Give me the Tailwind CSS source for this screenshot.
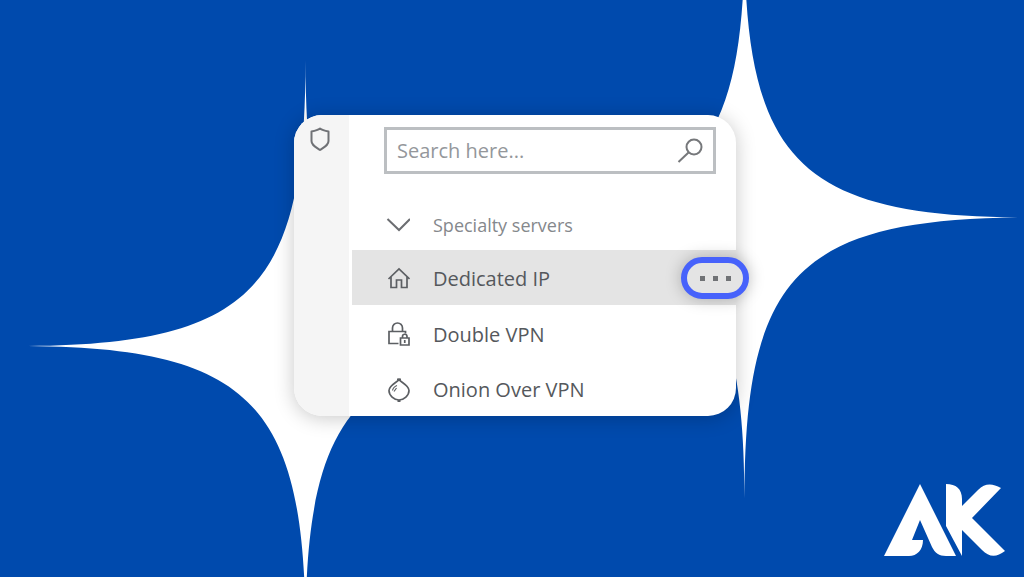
<!DOCTYPE html>
<html lang="en">

<head>
    <meta charset="UTF-8">
    <meta name="viewport" content="width=device-width, initial-scale=1.0">
    <title>Specialty servers</title>
    <script src="https://cdn.jsdelivr.net/npm/@tailwindcss/browser@4"></script>
</head>

<body class="relative min-h-screen overflow-hidden bg-[#004aad] font-['Open_Sans','Noto_Sans',sans-serif]">
    <!-- background stars -->
    <svg class="absolute inset-0 h-full w-full" viewBox="0 0 1024 577" preserveAspectRatio="xMidYMid slice" fill="#fff" aria-hidden="true">
        <path d="M305.5 60C305.5 291 361 346 594 346C361 346 305.500 402 305.500 633C305.500 402 250 346 17 346C250 346 305.500 291 305.500 60Z" />
        <path d="M744.500 -64C744.500 162 799.500 217.500 1032 217.500C799.500 217.500 744.500 273 744.500 499C744.500 273 689.500 217.500 463 217.500C689.500 217.500 744.500 162 744.500 -64Z" />
    </svg>

    <main class="relative flex min-h-screen items-center justify-center pb-[46px] pl-[6px]">
        <section class="flex w-full max-w-[442px] rounded-[28px] bg-white shadow-[0_2px_20px_rgba(0,0,0,0.22)]">
            <aside class="w-[55px] shrink-0 rounded-l-[28px] bg-[#f5f5f5] pt-3 pl-4">
                <svg class="h-6 w-5" viewBox="0 0 20 24" fill="none" stroke="#707276" stroke-width="2" stroke-linejoin="round" role="img" aria-label="Shield">
                    <path d="M10 1.500C8 3 5 3.800 1.500 4.500V14C1.500 18 5 19.500 10 23C15 19.500 18.500 18 18.500 14V4.500C15 3.800 12 3 10 1.500Z" />
                </svg>
            </aside>

            <div class="min-w-0 flex-1 pt-3 pl-[3px]">
                <form class="relative mr-5 ml-8">
                    <input type="text" aria-label="Search" placeholder="Search here..."
                        class="block h-[47px] w-full border-3 border-[#bcbfc2] bg-white pr-12 pl-[10px] text-[20px] text-[#55585c] placeholder:text-[#94979b] focus:outline-none">
                    <button type="submit" aria-label="Search" class="absolute top-[10px] right-3">
                        <svg class="h-7 w-7" viewBox="0 0 28 28" fill="none" stroke="#76787b" stroke-width="2">
                            <circle cx="18" cy="10" r="7.500" />
                            <path d="M12.500 15.500L2.500 25" />
                        </svg>
                    </button>
                </form>

                <button type="button" class="mt-6 flex h-[52px] w-full items-center gap-[23px] pt-[2px] pl-[34px] text-[18px] text-[#85888c]">
                    <svg class="h-6 w-6" viewBox="0 0 24 24" fill="none" stroke="#6c6e72" stroke-width="2">
                        <path d="M1.500 6L13 17L24 6" />
                    </svg>
                    Specialty servers
                </button>

                <ul class="text-[20px] text-[#55585c]">
                    <li class="relative bg-[#e4e4e4]">
                        <a href="#" class="flex h-[55px] items-center gap-[23px] pt-[3px] pl-[34px]">
                            <svg class="h-6 w-6" viewBox="0 0 24 24" fill="none" stroke="#5c5f63" stroke-width="1.700">
                                <path d="M2.500 12L13 2L23.500 12M5 10V20.500H10.500V13H15.500V20.500H21V10" />
                            </svg>
                            Dedicated IP
                        </a>
                        <button type="button" aria-label="More options"
                            class="absolute top-[7px] -right-[13px] flex h-[42px] w-[68px] items-center justify-center gap-2 rounded-full border-6 border-[#4762fb] bg-[#e4e4e4] shadow-[0_0_16px_rgba(0,0,0,0.25)]">
                            <span class="size-[5px] bg-[#707275]"></span>
                            <span class="size-[5px] bg-[#707275]"></span>
                            <span class="size-[5px] bg-[#707275]"></span>
                        </button>
                    </li>
                    <li>
                        <a href="#" class="flex h-[56px] items-center gap-[23px] pt-[3px] pl-[34px]">
                            <svg class="h-7 w-6" viewBox="0 0 24 28" fill="none" stroke="#5c5f63" stroke-width="1.700">
                                <path d="M12.500 22.500H3V10.500H19.500V12.500M6.500 10V7A5 5 0 0 1 16.500 7V10" />
                                <path d="M14.500 17H23V24H14.500ZM16.500 17V15.500A2.200 2.200 0 0 1 21 15.500V17M18.750 19V22" />
                            </svg>
                            Double VPN
                        </a>
                    </li>
                    <li>
                        <a href="#" class="flex h-[55px] items-center gap-[23px] pt-[3px] pl-[34px]">
                            <svg class="h-6 w-6" viewBox="0 0 24 24" fill="none" stroke="#5c5f63" stroke-width="1.700">
                                <path d="M13 1.500C11 4.500 3 7.500 3 12.500C3 17.500 8 22 13 22C18 22 23 17.500 23 12.500C23 7.500 15 4.500 13 1.500Z" />
                                <path d="M11 1.500H15M11.500 23H14.500" stroke-width="2" />
                                <path d="M6.500 12.500C7 10 8.500 8.500 11 7.500M8 13.500L10.500 10" stroke-width="1.200" />
                            </svg>
                            Onion Over VPN
                        </a>
                    </li>
                </ul>
            </div>
        </section>
    </main>

    <!-- brand mark -->
    <svg class="absolute right-[18px] bottom-5 h-[74px] w-[122px]" viewBox="0 0 122 74" fill="#fff" role="img" aria-label="AK">
        <path d="M36 1L72 73H62C55 73 51 70 48 64L36 37L28 57H39C39 67 33 73 25 73H0Z" />
        <path d="M62 1C72 1 78 6 78 16V23L94 7C101 0 108 0 117 5L88 35L121 68C112 75 105 74 98 67L78 47V73L62 43Z" />
    </svg>
</body>

</html>
